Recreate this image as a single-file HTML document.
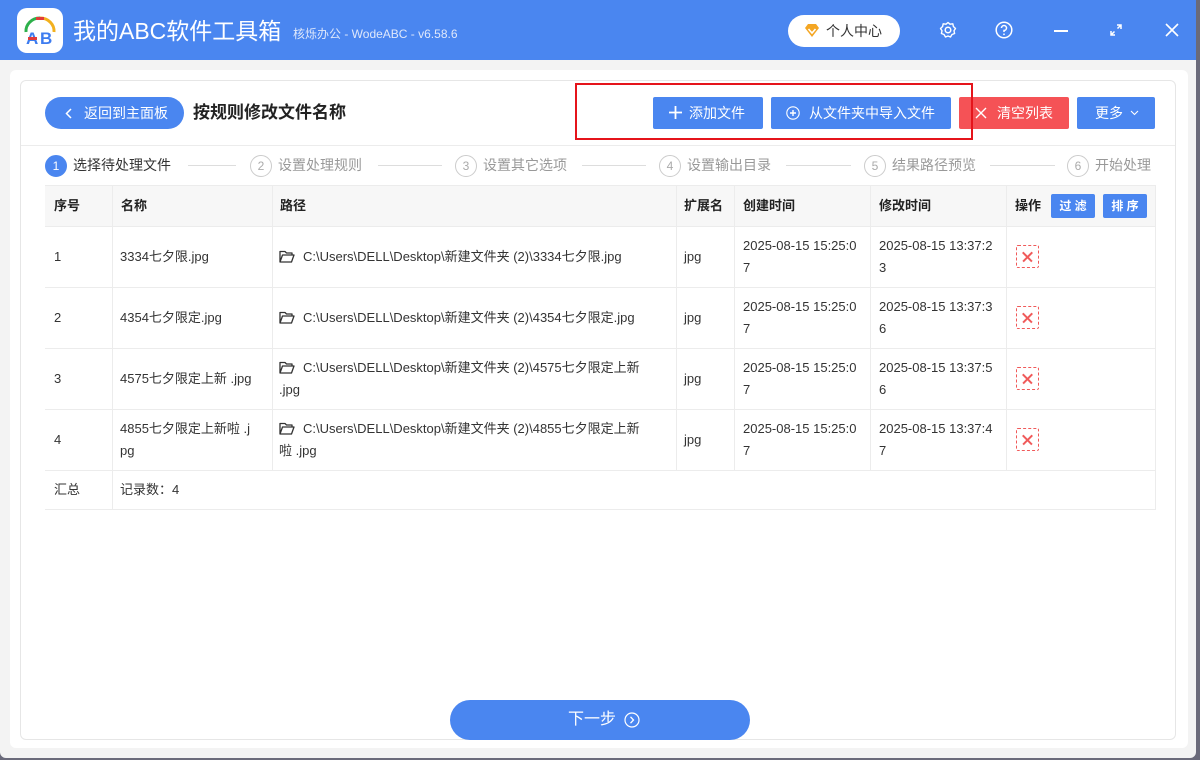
<!DOCTYPE html>
<html><head><meta charset="utf-8"><style>
*{margin:0;padding:0;box-sizing:border-box}
body{width:1200px;height:760px;overflow:hidden;background:#6a6a7a;font-family:"Liberation Sans","Noto Sans CJK SC",sans-serif;position:relative;color:#333}
.a{position:absolute}
.win{left:0;top:0;width:1196px;height:758px;background:#f3f3f3;border-radius:0 0 6px 6px}
.hdr{left:0;top:0;width:1196px;height:60px;background:#4a86f0}
.btn{position:absolute;height:32px;top:97px;color:#fff;font-size:14px;line-height:32px;text-align:center;border-radius:2px}
.c{position:absolute;font-size:13px;line-height:22px;color:#333}
.h{font-weight:bold;color:#222}
.step{position:absolute;top:153px;font-size:14px;line-height:24px;color:#999}
.num{display:inline-block;width:22px;height:22px;border:1px solid #ccc;border-radius:50%;text-align:center;line-height:20px;font-size:12px;color:#aaa;margin-right:6px;vertical-align:middle}
.line{position:absolute;top:165px;height:1px;background:#ddd}
.del{position:absolute;left:1016px;width:23px;height:23px;border:1px dashed #f05a5a;border-radius:2px}
.del:before,.del:after{content:"";position:absolute;left:4px;top:10px;width:13px;height:1.5px;background:#f05a5a;transform:rotate(45deg)}
.del:after{transform:rotate(-45deg)}
.fold{display:inline-block;vertical-align:-2px;margin-right:8px}
</style></head><body>
<div class="a win"></div>
<div class="a hdr"></div>
<div class="a" style="left:17px;top:8px;width:46px;height:45px;background:#fff;border-radius:10px">
<svg width="46" height="45" viewBox="0 0 46 45"><path d="M9 24 A14 13 0 0 1 23 10" stroke="#2db04b" stroke-width="3" fill="none"/><path d="M23 10 A14 13 0 0 1 37 24" stroke="#f2b01e" stroke-width="3" fill="none"/><path d="M19 10.5 L27 10.5" stroke="#e23b3b" stroke-width="3"/>
<text x="9" y="36" font-size="17" font-weight="bold" fill="#3d7cf0" font-family="Liberation Sans">A</text><text x="23" y="36" font-size="17" font-weight="bold" fill="#3d7cf0" font-family="Liberation Sans">B</text><rect x="11" y="29" width="9" height="3" fill="#e23b3b"/></svg></div>
<div class="a" style="left:73px;top:14px;font-size:23px;color:#fff;line-height:34px">我的ABC软件工具箱</div>
<div class="a" style="left:293px;top:25px;font-size:12px;color:#dfe8fb">核烁办公 - WodeABC - v6.58.6</div>
<div class="a" style="left:788px;top:15px;width:112px;height:32px;background:#fff;border-radius:16px;font-size:14px;line-height:32px;color:#333;padding-left:38px">个人中心
<svg class="a" style="left:16px;top:9px" width="16" height="14" viewBox="0 0 16 14"><path d="M1 4 L4 0 H12 L15 4 L8 13 Z" fill="#f4a623"/><path d="M4.5 5 L8 9 L11.5 5" stroke="#fff" stroke-width="1.6" fill="none"/></svg></div>
<svg class="a" style="left:939px;top:21px" width="18" height="18" viewBox="0 0 18 18"><circle cx="9" cy="9" r="2.8" stroke="#fff" stroke-width="1.5" fill="none"/><path d="M9 1.5 L11 3.2 L13.8 2.8 L14.4 5.5 L16.5 7.5 L15 9.8 L15.6 12.5 L13 13.5 L11.5 16 L9 15 L6.5 16 L5 13.5 L2.4 12.5 L3 9.8 L1.5 7.5 L3.6 5.5 L4.2 2.8 L7 3.2 Z" stroke="#fff" stroke-width="1.4" fill="none" stroke-linejoin="round"/></svg>
<svg class="a" style="left:995px;top:21px" width="18" height="18" viewBox="0 0 18 18"><circle cx="9" cy="9" r="7.8" stroke="#fff" stroke-width="1.5" fill="none"/><path d="M6.5 7 A2.5 2.5 0 1 1 9 9.5 V11" stroke="#fff" stroke-width="1.5" fill="none"/><circle cx="9" cy="13.3" r="0.9" fill="#fff"/></svg>
<div class="a" style="left:1054px;top:30px;width:14px;height:2px;background:#fff"></div>
<svg class="a" style="left:1109px;top:23px" width="14" height="14" viewBox="0 0 14 14"><path d="M8 2 H12 V6 M12 2 L8.5 5.5 M6 12 H2 V8 M2 12 L5.5 8.5" stroke="#fff" stroke-width="1.5" fill="none"/></svg>
<svg class="a" style="left:1165px;top:23px" width="14" height="14" viewBox="0 0 14 14"><path d="M1 1 L13 13 M13 1 L1 13" stroke="#fff" stroke-width="1.6"/></svg>

<div class="a" style="left:10px;top:70px;width:1178px;height:678px;background:#fff;border-radius:6px"></div>
<div class="a" style="left:20px;top:80px;width:1156px;height:660px;border:1px solid #e6e6e6;border-radius:6px"></div>
<div class="a" style="left:21px;top:145px;width:1154px;height:1px;background:#ececec"></div>

<div class="a" style="left:45px;top:97px;width:139px;height:32px;background:#4a86f0;border-radius:16px;color:#fff;font-size:14px;line-height:32px;padding-left:39px">返回到主面板
<svg class="a" style="left:20px;top:11px" width="8" height="11" viewBox="0 0 8 11"><path d="M6 1 L1.5 5.5 L6 10" stroke="#fff" stroke-width="1.5" fill="none"/></svg></div>
<div class="a" style="left:193px;top:100px;font-size:17px;font-weight:bold;color:#222;line-height:26px">按规则修改文件名称</div>

<div class="btn" style="left:653px;width:110px;background:#4a86f0;padding-left:18px">添加文件<svg class="a" style="left:16px;top:9px" width="13" height="13" viewBox="0 0 13 13"><path d="M6.5 0 V13 M0 6.5 H13" stroke="#fff" stroke-width="1.8"/></svg></div>
<div class="btn" style="left:771px;width:180px;background:#4a86f0;padding-left:22px">从文件夹中导入文件<svg class="a" style="left:15px;top:9px" width="14" height="14" viewBox="0 0 14 14"><circle cx="7" cy="7" r="6.2" stroke="#fff" stroke-width="1.1" fill="none"/><path d="M7 4 V10 M4 7 H10" stroke="#fff" stroke-width="1.4"/></svg></div>
<div class="btn" style="left:959px;width:110px;background:#f55256;padding-left:22px">清空列表<svg class="a" style="left:16px;top:10px" width="12" height="12" viewBox="0 0 12 12"><path d="M1 1 L11 11 M11 1 L1 11" stroke="#fff" stroke-width="1.4"/></svg></div>
<div class="btn" style="left:1077px;width:78px;background:#4a86f0;padding-right:14px">更多<svg class="a" style="left:53px;top:13px" width="9" height="6" viewBox="0 0 9 6"><path d="M1 1 L4.5 4.5 L8 1" stroke="#fff" stroke-width="1.1" fill="none"/></svg></div>
<div class="a" style="left:575px;top:83px;width:398px;height:57px;border:2px solid #e5141b"></div>

<div class="step" style="left:45px;color:#333"><span class="num" style="background:#4a86f0;border-color:#4a86f0;color:#fff">1</span>选择待处理文件</div>
<div class="line" style="left:188px;width:48px"></div>
<div class="step" style="left:250px"><span class="num">2</span>设置处理规则</div>
<div class="line" style="left:378px;width:64px"></div>
<div class="step" style="left:455px"><span class="num">3</span>设置其它选项</div>
<div class="line" style="left:582px;width:64px"></div>
<div class="step" style="left:659px"><span class="num">4</span>设置输出目录</div>
<div class="line" style="left:786px;width:65px"></div>
<div class="step" style="left:864px"><span class="num">5</span>结果路径预览</div>
<div class="line" style="left:990px;width:65px"></div>
<div class="step" style="left:1067px"><span class="num">6</span>开始处理</div>

<div class="a" style="left:45px;top:186px;width:1110px;height:41px;background:#f7f7f7"></div>
<svg class="a" style="left:45px;top:185px" width="1111" height="326">
<g stroke="#ececec" stroke-width="1">
<line x1="0" y1="0.5" x2="1111" y2="0.5"/><line x1="0" y1="41.5" x2="1111" y2="41.5"/><line x1="0" y1="102.5" x2="1111" y2="102.5"/><line x1="0" y1="163.5" x2="1111" y2="163.5"/><line x1="0" y1="224.5" x2="1111" y2="224.5"/><line x1="0" y1="285.5" x2="1111" y2="285.5"/><line x1="0" y1="324.5" x2="1111" y2="324.5"/>
<line x1="67.5" y1="0" x2="67.5" y2="325"/><line x1="227.5" y1="0" x2="227.5" y2="286"/><line x1="631.5" y1="0" x2="631.5" y2="286"/><line x1="689.5" y1="0" x2="689.5" y2="286"/><line x1="825.5" y1="0" x2="825.5" y2="286"/><line x1="961.5" y1="0" x2="961.5" y2="286"/><line x1="1110.5" y1="0" x2="1110.5" y2="325"/>
</g></svg>
<div class="c h" style="left:54px;top:195px">序号</div>
<div class="c h" style="left:121px;top:195px">名称</div>
<div class="c h" style="left:280px;top:195px">路径</div>
<div class="c h" style="left:684px;top:195px">扩展名</div>
<div class="c h" style="left:743px;top:195px">创建时间</div>
<div class="c h" style="left:879px;top:195px">修改时间</div>
<div class="c h" style="left:1015px;top:195px">操作</div>
<div class="a" style="left:1051px;top:194px;width:44px;height:24px;background:#4a86f0;color:#fff;font-size:12px;line-height:24px;text-align:center;border-radius:2px;font-weight:bold">过 滤</div>
<div class="a" style="left:1103px;top:194px;width:44px;height:24px;background:#4a86f0;color:#fff;font-size:12px;line-height:24px;text-align:center;border-radius:2px;font-weight:bold">排 序</div>

<div class="c" style="left:54px;top:246px">1</div>
<div class="c" style="left:120px;top:246px">3334七夕限.jpg</div>
<div class="c" style="left:279px;top:246px"><svg class="fold" width="16" height="13" viewBox="0 0 16 13"><path d="M1 12 V1.5 H6 L7.5 3 H13 V5 M1 12 L3.5 5 H15 L12.5 12 Z" stroke="#333" stroke-width="1.3" fill="none" stroke-linejoin="round"/></svg>C:\Users\DELL\Desktop\新建文件夹 (2)\3334七夕限.jpg</div>
<div class="c" style="left:684px;top:246px">jpg</div>
<div class="c" style="left:743px;top:235px">2025-08-15 15:25:0<br>7</div>
<div class="c" style="left:879px;top:235px">2025-08-15 13:37:2<br>3</div>
<div class="del" style="top:245px"></div>
<div class="c" style="left:54px;top:307px">2</div>
<div class="c" style="left:120px;top:307px">4354七夕限定.jpg</div>
<div class="c" style="left:279px;top:307px"><svg class="fold" width="16" height="13" viewBox="0 0 16 13"><path d="M1 12 V1.5 H6 L7.5 3 H13 V5 M1 12 L3.5 5 H15 L12.5 12 Z" stroke="#333" stroke-width="1.3" fill="none" stroke-linejoin="round"/></svg>C:\Users\DELL\Desktop\新建文件夹 (2)\4354七夕限定.jpg</div>
<div class="c" style="left:684px;top:307px">jpg</div>
<div class="c" style="left:743px;top:296px">2025-08-15 15:25:0<br>7</div>
<div class="c" style="left:879px;top:296px">2025-08-15 13:37:3<br>6</div>
<div class="del" style="top:306px"></div>
<div class="c" style="left:54px;top:368px">3</div>
<div class="c" style="left:120px;top:368px">4575七夕限定上新 .jpg</div>
<div class="c" style="left:279px;top:357px"><svg class="fold" width="16" height="13" viewBox="0 0 16 13"><path d="M1 12 V1.5 H6 L7.5 3 H13 V5 M1 12 L3.5 5 H15 L12.5 12 Z" stroke="#333" stroke-width="1.3" fill="none" stroke-linejoin="round"/></svg>C:\Users\DELL\Desktop\新建文件夹 (2)\4575七夕限定上新<br>.jpg</div>
<div class="c" style="left:684px;top:368px">jpg</div>
<div class="c" style="left:743px;top:357px">2025-08-15 15:25:0<br>7</div>
<div class="c" style="left:879px;top:357px">2025-08-15 13:37:5<br>6</div>
<div class="del" style="top:367px"></div>
<div class="c" style="left:54px;top:429px">4</div>
<div class="c" style="left:120px;top:418px">4855七夕限定上新啦 .j<br>pg</div>
<div class="c" style="left:279px;top:418px"><svg class="fold" width="16" height="13" viewBox="0 0 16 13"><path d="M1 12 V1.5 H6 L7.5 3 H13 V5 M1 12 L3.5 5 H15 L12.5 12 Z" stroke="#333" stroke-width="1.3" fill="none" stroke-linejoin="round"/></svg>C:\Users\DELL\Desktop\新建文件夹 (2)\4855七夕限定上新<br>啦 .jpg</div>
<div class="c" style="left:684px;top:429px">jpg</div>
<div class="c" style="left:743px;top:418px">2025-08-15 15:25:0<br>7</div>
<div class="c" style="left:879px;top:418px">2025-08-15 13:37:4<br>7</div>
<div class="del" style="top:428px"></div>
<div class="c" style="left:54px;top:479px">汇总</div>
<div class="c" style="left:120px;top:479px">记录数：4</div>

<div class="a" style="left:450px;top:700px;width:300px;height:40px;background:#4a86f0;border-radius:20px;color:#fff;font-size:16px;line-height:40px;text-align:center;padding-right:16px">下一步
<svg class="a" style="left:174px;top:12px" width="16" height="16" viewBox="0 0 16 16"><circle cx="8" cy="8" r="7" stroke="#fff" stroke-width="1.2" fill="none"/><path d="M6.5 4.8 L9.5 8 L6.5 11.2" stroke="#fff" stroke-width="1.3" fill="none"/></svg></div>
</body></html>
